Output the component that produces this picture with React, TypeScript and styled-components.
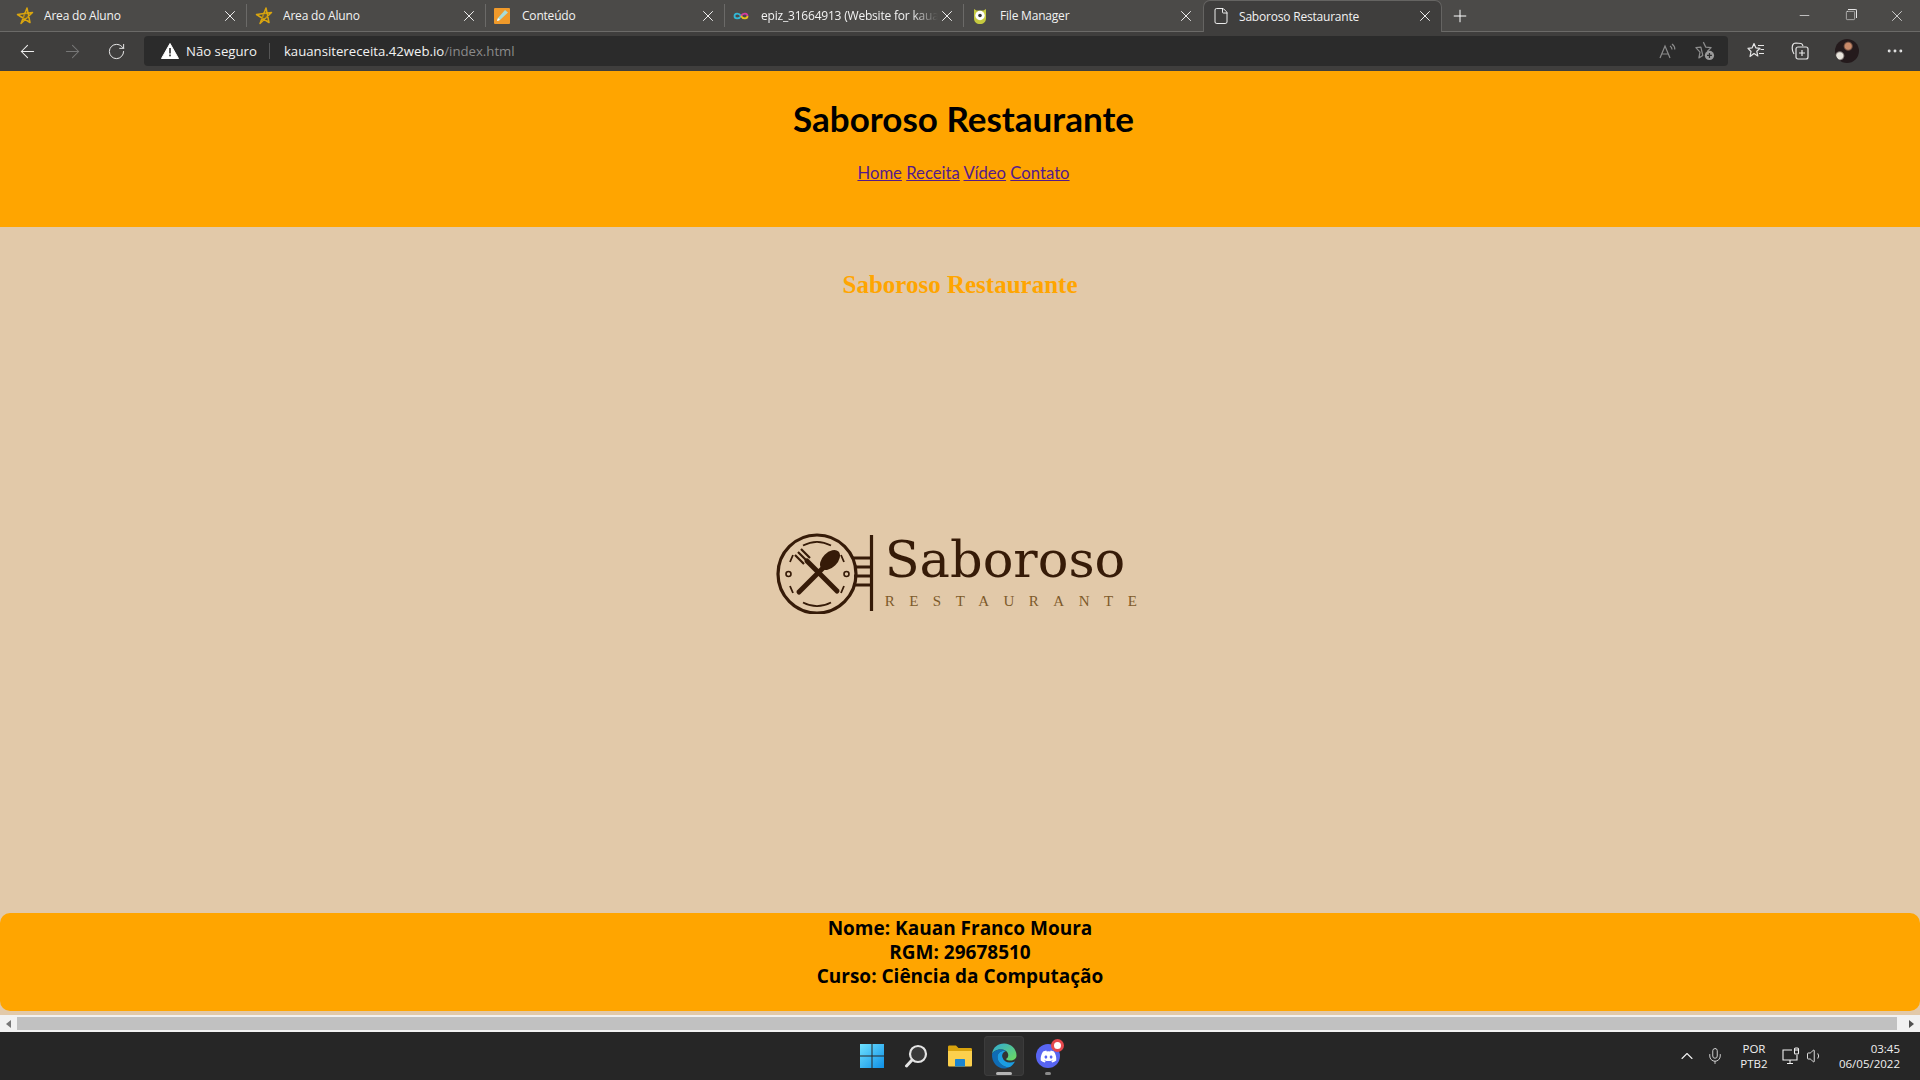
import {ReactNode} from 'react'
import styled, {createGlobalStyle} from 'styled-components'
import {
  ArrowLeft,
  ArrowRight,
  ChevronUp,
  File,
  Mic,
  Minus,
  MoreHorizontal,
  Plus,
  RotateCw,
  Square,
  Volume1,
  X,
} from 'lucide-react'
import {FaDiscord} from 'react-icons/fa'

const GlobalStyle = createGlobalStyle`
  html, body {
    margin: 0;
    overflow: hidden;
  }
  body {
    font-family: "Open Sans", "Liberation Sans", sans-serif;
  }
`

function StarIcon() {
  return (
    <svg width="18" height="18" viewBox="0 0 18 18" fill="none">
      <path
        d="M11 1 L5 16.500 L16.500 5.500 L1.500 7.500 L14 15.500 Z"
        stroke="#d9a50f"
        strokeWidth="1.500"
        strokeLinejoin="round"
      />
      <path d="M7 8 L11 6 L12 11 L7 12 Z" fill="#8a6d1e" opacity="0.400" />
    </svg>
  )
}

function PencilIcon() {
  return (
    <svg width="16" height="16" viewBox="0 0 16 16">
      <rect width="16" height="16" rx="1" fill="#f09a2a" />
      <path d="M3 13 L4 10 L11 2 L14 4.500 L6 12 Z" fill="#a8dcd8" />
      <path d="M3 13 L4 10 L6 12 Z" fill="#fff" />
    </svg>
  )
}

function InfinityIcon() {
  return (
    <svg width="16" height="16" viewBox="0 0 16 16" fill="none" strokeWidth="1.800">
      <path d="M8 8 C6 4.500 1.500 5 1.500 8 C1.500 11 6 11.500 8 8" stroke="#32b7d6" />
      <path d="M8 8 C10 4.500 14.500 5 14.500 8" stroke="#d63ba0" />
      <path d="M8 8 C10 11.500 14.500 11 14.500 8" stroke="#e8c21d" />
    </svg>
  )
}

function OwlIcon() {
  return (
    <svg width="16" height="18" viewBox="0 0 16 18">
      <path d="M2 2 L4.500 3.500 H11.500 L14 2 V11 C14 15 11.500 17 8 17 C4.500 17 2 15 2 11 Z" fill="#c5c93f" />
      <circle cx="8" cy="8.500" r="4.700" fill="#fff" />
      <circle cx="8" cy="8.500" r="1.800" fill="#333" />
    </svg>
  )
}

function WarningIcon() {
  return (
    <svg width="18" height="16" viewBox="0 0 18 16">
      <path d="M9 0.500 L17.500 15.500 H0.500 Z" fill="#fff" stroke="#fff" strokeLinejoin="round" />
      <rect x="8.200" y="5" width="1.600" height="5.500" fill="#2b2b2b" />
      <rect x="8.200" y="11.500" width="1.600" height="1.800" fill="#2b2b2b" />
    </svg>
  )
}

function ReadAloudIcon() {
  return (
    <svg width="18" height="16" viewBox="0 0 18 16" fill="none" stroke="#8c8c8c" strokeWidth="1.200">
      <path d="M1 15 L6 3 L11 15 M3 11 H9" />
      <path d="M11 3 C12.500 4 13 5 13 6.500 M13 1 C15 2.500 16 4 15.800 6.500" />
    </svg>
  )
}

function FavoriteAddIcon() {
  return (
    <svg width="20" height="20" viewBox="0 0 18 18" fill="none">
      <path
        d="M7.500 1 L9.700 5.500 L14.500 6 L11 9.500 M7 13 L3.500 15.200 L4.500 10 L.8 6 L5.300 5.500 Z"
        stroke="#8c8c8c"
        strokeWidth="1.100"
        strokeLinejoin="round"
      />
      <circle cx="13" cy="13" r="4.200" fill="#9a9a9a" />
      <path d="M13 10.800 V15.200 M10.800 13 H15.200" stroke="#2b2b2b" strokeWidth="1.100" />
    </svg>
  )
}

function FavoritesIcon() {
  return (
    <svg width="18" height="18" viewBox="0 0 18 18" fill="none" stroke="#e6e6e6" strokeWidth="1.200">
      <path
        d="M7 1.500 L8.800 5.800 L13 6.300 L9.800 9.300 L10.800 14 L7 11.500 L3 14.500 L4 9.500 L1 6.300 L5.200 5.800 Z"
        strokeLinejoin="round"
      />
      <path d="M11 3.500 H17 M13.500 7.500 H17 M12 11.500 H17" />
    </svg>
  )
}

function CollectionsIcon() {
  return (
    <svg width="18" height="18" viewBox="0 0 18 18" fill="none" stroke="#e6e6e6" strokeWidth="1.200">
      <path d="M3 12 C1.500 10 1 6 1.500 3.500 C2 1.500 3.500 1 5 1 L10 1.500 C11 1.600 11.500 2.500 12 4" />
      <rect x="5" y="5" width="12" height="12" rx="2" />
      <path d="M11 8 V14 M8 11 H14" />
    </svg>
  )
}

function NetworkIcon() {
  return (
    <svg width="18" height="18" viewBox="0 0 18 18" fill="none" stroke="#f0f0f0" strokeWidth="1.100">
      <path d="M10 3 H1 V13 H15 V8" />
      <path d="M8 13 V16 M5 16.500 H11" />
      <rect x="12.500" y="1" width="4" height="6" rx="1" />
      <path d="M12.500 3 H16.500" />
    </svg>
  )
}

function WindowsIcon() {
  return (
    <svg width="24" height="24" viewBox="0 0 24 24">
      <defs>
        <linearGradient id="win" x1="0" y1="0" x2="1" y2="1">
          <stop offset="0" stopColor="#6fe2ff" />
          <stop offset="1" stopColor="#0e8fe6" />
        </linearGradient>
      </defs>
      <path
        d="M0 0 H11.500 V11.500 H0 Z M12.500 0 H24 V11.500 H12.500 Z M0 12.500 H11.500 V24 H0 Z M12.500 12.500 H24 V24 H12.500 Z"
        fill="url(#win)"
      />
    </svg>
  )
}

function SearchIcon() {
  return (
    <svg width="24" height="24" viewBox="0 0 24 24" fill="none">
      <circle cx="14" cy="10" r="8" stroke="#e4e4e4" strokeWidth="2.200" fill="#3a3a3a" />
      <path d="M8 16 L2.500 22" stroke="#e4e4e4" strokeWidth="3" strokeLinecap="round" />
    </svg>
  )
}

function FolderIcon() {
  return (
    <svg width="24" height="22" viewBox="0 0 24 22">
      <path d="M0 2 C0 1 .5 .5 1.500 .5 H8 L10.500 3 H22.500 C23.500 3 24 3.500 24 4.500 V8 H0 Z" fill="#d9a30d" />
      <path d="M0 6 H24 V20 C24 21 23.500 21.500 22.500 21.500 H1.500 C.5 21.500 0 21 0 20 Z" fill="#fcd04d" />
      <path d="M7 15 C7 14.400 7.400 14 8 14 H16 C16.600 14 17 14.400 17 15 V21.500 H7 Z" fill="#1b86d1" />
    </svg>
  )
}

function EdgeIcon() {
  return (
    <svg width="26" height="26" viewBox="0 0 26 26">
      <defs>
        <linearGradient id="edgeGreen" x1="0" y1="0" x2="1" y2="1">
          <stop offset="0" stopColor="#2fa9d8" />
          <stop offset="1" stopColor="#6fdc5a" />
        </linearGradient>
      </defs>
      <path
        d="M1 11 C2 4 7 .5 13 .5 C20 .5 25.500 6 25.500 12.500 C25.500 16 22.500 17.500 19.500 17.500 C17.500 17.500 15.500 17 15 16 C18 14.500 18 10 15 8 C10 5 3 7 1 11 Z"
        fill="url(#edgeGreen)"
      />
      <path
        d="M1 11 C3 7 10 5 15 8 C12 7 6.500 9 6.500 14 C6.500 20 13 25 19 24 C16 25.500 14.500 25.500 13 25.500 C6 25.500 .5 19 1 11 Z"
        fill="#0f6cb5"
      />
      <path
        d="M6.500 14 C6.500 9 12 7 15 8 C12 9 10.500 11.500 11.500 14.500 C13 19 18 21 24 18.500 C22.500 21 21 23 19 24 C13 25 6.500 20 6.500 14 Z"
        fill="#1b9de2"
      />
    </svg>
  )
}

function LogoMark() {
  return (
    <svg width="110" height="90" viewBox="0 0 110 90" fill="none" stroke="#361b08">
      <circle cx="48" cy="50" r="39" strokeWidth="3.200" />
      <path d="M34 21.500 A30 30 0 0 1 62 21.500 M34 78.500 A30 30 0 0 0 62 78.500" strokeWidth="1.800" />
      <path d="M21 38 L24 31 M21 62 L24 69 M75 38 L72 31 M75 62 L72 69" strokeWidth="1.800" />
      <circle cx="19.500" cy="50" r="2.500" strokeWidth="1.600" />
      <circle cx="77.500" cy="50" r="2.500" strokeWidth="1.600" />
      <path d="M68 67 L38 37" strokeWidth="5" strokeLinecap="round" />
      <path d="M38 37 L29 28 M41 34 L32 25 M35 40 L26 31" strokeWidth="2.200" />
      <path d="M30 68 L55 43" strokeWidth="5" strokeLinecap="round" />
      <ellipse cx="61" cy="36" rx="12" ry="7.500" transform="rotate(-45 61 36)" fill="#361b08" stroke="none" />
      <path d="M84 34 H102 M85 43 H102 M85 52 H102 M84 61 H102" strokeWidth="2.800" />
      <path d="M102.500 11 V87" strokeWidth="3.200" />
    </svg>
  )
}

type TabData = {title: string; icon: ReactNode; active?: boolean; fade?: boolean}

const tabs: TabData[] = [
  {title: 'Area do Aluno', icon: <StarIcon />},
  {title: 'Area do Aluno', icon: <StarIcon />},
  {title: 'Conteúdo', icon: <PencilIcon />},
  {title: 'epiz_31664913 (Website for kaua', icon: <InfinityIcon />, fade: true},
  {title: 'File Manager', icon: <OwlIcon />},
  {title: 'Saboroso Restaurante', icon: <File size={18} color="#fff" strokeWidth={1.200} />, active: true},
]

export default function App() {
  return (
    <>
      <GlobalStyle />
      <Screen>
        <TabStrip>
          {tabs.map((tab, i) => (
            <Tab key={i} $active={tab.active}>
              <Favicon $active={tab.active}>{tab.icon}</Favicon>
              <TabTitle $fade={tab.fade}>{tab.title}</TabTitle>
              <X size={18} color="#f2f2f2" strokeWidth={1.300} />
            </Tab>
          ))}
          <NewTab>
            <Plus size={20} color="#fff" strokeWidth={1.200} />
          </NewTab>
          <WindowControls>
            <Minus size={15} color="#e6e6e6" strokeWidth={1.200} />
            <RestoreIcon>
              <Square size={11} color="#e6e6e6" strokeWidth={1.300} />
            </RestoreIcon>
            <X size={18} color="#e6e6e6" strokeWidth={1.100} />
          </WindowControls>
        </TabStrip>

        <Toolbar>
          <NavButtons>
            <ArrowLeft size={21} color="#f0f0f0" strokeWidth={1.200} />
            <ArrowRight size={21} color="#777" strokeWidth={1.200} />
            <RotateCw size={19} color="#f0f0f0" strokeWidth={1.200} />
          </NavButtons>
          <AddressBar>
            <WarningIcon />
            <Security>Não seguro</Security>
            <Divider />
            <Url>
              kauansitereceita.42web.io<UrlPath>/index.html</UrlPath>
            </Url>
            <AddressActions>
              <ReadAloudIcon />
              <FavoriteAddIcon />
            </AddressActions>
          </AddressBar>
          <ToolbarActions>
            <FavoritesIcon />
            <CollectionsIcon />
            <Avatar />
            <MoreHorizontal size={20} color="#e6e6e6" strokeWidth={1.500} />
          </ToolbarActions>
        </Toolbar>

        <Page>
          <Header>
            <SiteTitle>Saboroso Restaurante</SiteTitle>
            <Nav>
              <a href="#home">Home</a> <a href="#receita">Receita</a> <a href="#video">Vídeo</a>{' '}
              <a href="#contato">Contato</a>
            </Nav>
          </Header>
          <Main>
            <Heading>Saboroso Restaurante</Heading>
            <Logo>
              <LogoMark />
              <LogoText>
                <LogoName>Saboroso</LogoName>
                <LogoTagline>RESTAURANTE</LogoTagline>
              </LogoText>
            </Logo>
          </Main>
          <Footer>
            Nome: Kauan Franco Moura
            <br />
            RGM: 29678510
            <br />
            Curso: Ciência da Computação
          </Footer>
          <FooterGap />
          <Scrollbar>
            <ScrollArrow $dir="left" />
            <ScrollThumb />
            <ScrollArrow $dir="right" />
          </Scrollbar>
        </Page>

        <Taskbar>
          <span />
          <TaskIcons>
            <TaskItem>
              <WindowsIcon />
            </TaskItem>
            <TaskItem>
              <SearchIcon />
            </TaskItem>
            <TaskItem>
              <FolderIcon />
            </TaskItem>
            <TaskItem $active $running="wide">
              <EdgeIcon />
            </TaskItem>
            <TaskItem $running="dot">
              <DiscordBubble>
                <FaDiscord size={17} color="#fff" />
                <Badge />
              </DiscordBubble>
            </TaskItem>
          </TaskIcons>
          <Tray>
            <ChevronUp size={20} color="#f0f0f0" strokeWidth={1.300} />
            <TrayMic>
              <Mic size={18} color="#d0d0d0" strokeWidth={1.300} />
            </TrayMic>
            <Lang>
              POR
              <br />
              PTB2
            </Lang>
            <NetworkIcon />
            <TrayVolume>
              <Volume1 size={18} color="#f0f0f0" strokeWidth={1.200} />
            </TrayVolume>
            <Clock>
              03:45
              <br />
              06/05/2022
            </Clock>
          </Tray>
        </Taskbar>
      </Screen>
    </>
  )
}

const Screen = styled.div`
  width: 1920px;
  height: 1080px;
  display: flex;
  flex-direction: column;
  overflow: hidden;
`

const TabStrip = styled.div`
  height: 32px;
  box-sizing: border-box;
  display: flex;
  align-items: stretch;
  padding-left: 8px;
  background: #4b4a48;
  border-bottom: 1px solid #6b6a68;
`

const Tab = styled.div<{$active?: boolean}>`
  width: 239px;
  box-sizing: border-box;
  display: flex;
  align-items: center;
  padding: ${p => (p.$active ? '0 7px 1px 8px' : '0 7px 0 8px')};
  color: #f2f2f2;
  font-size: 12px;
  letter-spacing: -0.2px;
  background: ${p => (p.$active ? '#3f3e3d' : 'transparent')};
  border-radius: ${p => (p.$active ? '7px 7px 0 0' : '0')};
  border: 1px solid transparent;
  border-width: ${p => (p.$active ? '1px 1px 0' : '0 1px 0 0')};
  border-color: ${p => (p.$active ? '#656462' : 'transparent #6b6a68 transparent transparent')};
  margin: ${p => (p.$active ? '0 0 -1px' : '4px 0')};

  &:nth-child(5) {
    border-right-color: transparent;
  }
`

const Favicon = styled.span<{$active?: boolean}>`
  width: ${p => (p.$active ? '27px' : '28px')};
  flex: none;
  display: flex;
  align-items: center;
`

const TabTitle = styled.span<{$fade?: boolean}>`
  flex: 1;
  overflow: hidden;
  white-space: nowrap;
  ${p =>
    p.$fade &&
    `-webkit-mask-image: linear-gradient(to right, #000 85%, transparent 100%);
     mask-image: linear-gradient(to right, #000 85%, transparent 100%);`}
`

const NewTab = styled.div`
  width: 36px;
  display: flex;
  align-items: center;
  justify-content: center;
`

const WindowControls = styled.div`
  margin-left: auto;
  width: 138px;
  display: flex;
  align-items: center;
  justify-content: space-between;
  padding-right: 14px;
  padding-left: 15px;
  box-sizing: border-box;
`

const RestoreIcon = styled.span`
  display: flex;
  position: relative;

  &::after {
    content: '';
    position: absolute;
    top: -1px;
    right: -1px;
    width: 8px;
    height: 8px;
    border-top: 1px solid #e6e6e6;
    border-right: 1px solid #e6e6e6;
    border-radius: 0 2px 0 0;
  }
`

const Toolbar = styled.div`
  height: 39px;
  flex: none;
  box-sizing: border-box;
  padding-bottom: 1px;
  display: flex;
  align-items: center;
  background: #3f3e3d;
`

const NavButtons = styled.div`
  width: 144px;
  flex: none;
  display: flex;
  align-items: center;
  gap: 24px;
  padding-left: 17px;
  box-sizing: border-box;
`

const AddressBar = styled.div`
  width: 1584px;
  height: 30px;
  flex: none;
  box-sizing: border-box;
  display: flex;
  align-items: center;
  padding-left: 17px;
  background: #2b2b2b;
  border-radius: 4px;
  color: #f2f2f2;
  font-size: 13.200px;
`

const Security = styled.span`
  margin-left: 7px;
`

const Divider = styled.span`
  width: 1px;
  height: 16px;
  margin: 0 14px 0 12px;
  background: #555;
`

const Url = styled.span`
  white-space: nowrap;
`

const UrlPath = styled.span`
  color: #8a8a8a;
`

const AddressActions = styled.div`
  margin-left: auto;
  display: flex;
  align-items: center;
  gap: 18px;
  padding-right: 13px;
`

const ToolbarActions = styled.div`
  flex: 1;
  display: flex;
  align-items: center;
  gap: 26px;
  padding-left: 19px;
`

const Avatar = styled.span`
  width: 24px;
  height: 24px;
  border-radius: 50%;
  background: radial-gradient(circle at 55% 30%, #c98a6a 0 3px, transparent 5px),
    radial-gradient(circle at 20% 70%, #e8e4dc 0 3px, transparent 5px), #241a1c;
`

const Page = styled.div`
  flex: 1;
  min-height: 0;
  display: flex;
  flex-direction: column;
  background: #e2c9a9;
`

const Header = styled.header`
  height: 156px;
  flex: none;
  box-sizing: border-box;
  padding: 25px 0 0 7px;
  background: #ffa500;
  text-align: center;
  font-family: 'Lato', 'DejaVu Sans', sans-serif;
`

const SiteTitle = styled.h1`
  margin: 0;
  font-size: 35px;
  line-height: 44px;
  font-weight: 700;
  color: #000;
`

const Nav = styled.nav`
  margin-top: 22px;
  font-size: 16.700px;
  line-height: 22px;

  a {
    color: #551a8b;
  }
`

const Main = styled.main`
  flex: 1;
  min-height: 0;
  display: flex;
  flex-direction: column;
  align-items: center;
`

const Heading = styled.h2`
  margin: 44px 0 0;
  font-family: 'Liberation Serif', serif;
  font-size: 25px;
  line-height: 28px;
  font-weight: 700;
  color: #ffa500;
`

const Logo = styled.div`
  margin-top: 225px;
  display: flex;
  align-items: flex-start;
  gap: 6px;
`

const LogoText = styled.div`
  display: flex;
  flex-direction: column;
  padding-top: 4px;
`

const LogoName = styled.span`
  font-family: 'DejaVu Serif', serif;
  font-size: 51px;
  line-height: 64px;
  color: #361b08;
`

const LogoTagline = styled.span`
  font-family: 'Liberation Serif', serif;
  font-size: 15px;
  line-height: 18px;
  letter-spacing: 14.500px;
  color: #7d5a2a;
  white-space: nowrap;
`

const Footer = styled.footer`
  height: 98px;
  flex: none;
  box-sizing: border-box;
  padding-top: 3px;
  background: #ffa500;
  border-radius: 10px;
  text-align: center;
  font-size: 19px;
  line-height: 24px;
  font-weight: 700;
  color: #000;
`

const FooterGap = styled.div`
  height: 4px;
  flex: none;
`

const Scrollbar = styled.div`
  height: 17px;
  flex: none;
  display: flex;
  align-items: center;
  background: #f1f1f1;
`

const ScrollArrow = styled.span<{$dir: 'left' | 'right'}>`
  width: 17px;
  flex: none;
  display: flex;
  justify-content: center;

  &::before {
    content: '';
    border-style: solid;
    border-width: ${p => (p.$dir === 'left' ? '4px 5px 4px 0' : '4px 0 4px 5px')};
    border-color: transparent ${p => (p.$dir === 'left' ? '#777' : 'transparent')} transparent
      ${p => (p.$dir === 'right' ? '#505050' : 'transparent')};
  }
`

const ScrollThumb = styled.span`
  flex: 1;
  height: 13px;
  margin-right: 6px;
  background: #c1c1c1;
`

const Taskbar = styled.div`
  height: 48px;
  flex: none;
  display: grid;
  grid-template-columns: 1fr auto 1fr;
  align-items: center;
  background: #262626;
  color: #f0f0f0;
`

const TaskIcons = styled.div`
  display: flex;
  align-items: center;
  gap: 4px;
`

const TaskItem = styled.div<{$active?: boolean; $running?: 'wide' | 'dot'}>`
  width: 40px;
  height: 40px;
  display: flex;
  align-items: center;
  justify-content: center;
  border-radius: 4px;
  position: relative;
  background: ${p => (p.$active ? '#333333' : 'transparent')};
  box-shadow: ${p => (p.$active ? 'inset 0 0 0 1px #3c3c3c' : 'none')};

  &::after {
    content: '';
    display: ${p => (p.$running ? 'block' : 'none')};
    position: absolute;
    bottom: 1px;
    left: 50%;
    transform: translateX(-50%);
    width: ${p => (p.$running === 'wide' ? '16px' : '6px')};
    height: 3px;
    border-radius: 2px;
    background: ${p => (p.$running === 'wide' ? '#b5b5b5' : '#8a8a8a')};
  }
`

const DiscordBubble = styled.span`
  width: 24px;
  height: 24px;
  border-radius: 50%;
  background: #5865f2;
  display: flex;
  align-items: center;
  justify-content: center;
  position: relative;
`

const Badge = styled.span`
  position: absolute;
  top: -5px;
  right: -4px;
  width: 7px;
  height: 7px;
  border: 3.500px solid #e5484d;
  border-radius: 50%;
  background: #fff;
`

const Tray = styled.div`
  display: flex;
  align-items: center;
  justify-content: flex-end;
  padding-right: 20px;
  font-size: 11.500px;
  line-height: 15px;
`

const TrayMic = styled.span`
  display: flex;
  margin-left: 9px;
`

const TrayVolume = styled.span`
  display: flex;
  margin-left: 6px;
`

const Lang = styled.span`
  width: 40px;
  margin: 0 8px 0 10px;
  text-align: center;
`

const Clock = styled.span`
  margin-left: 15px;
  text-align: right;
`
